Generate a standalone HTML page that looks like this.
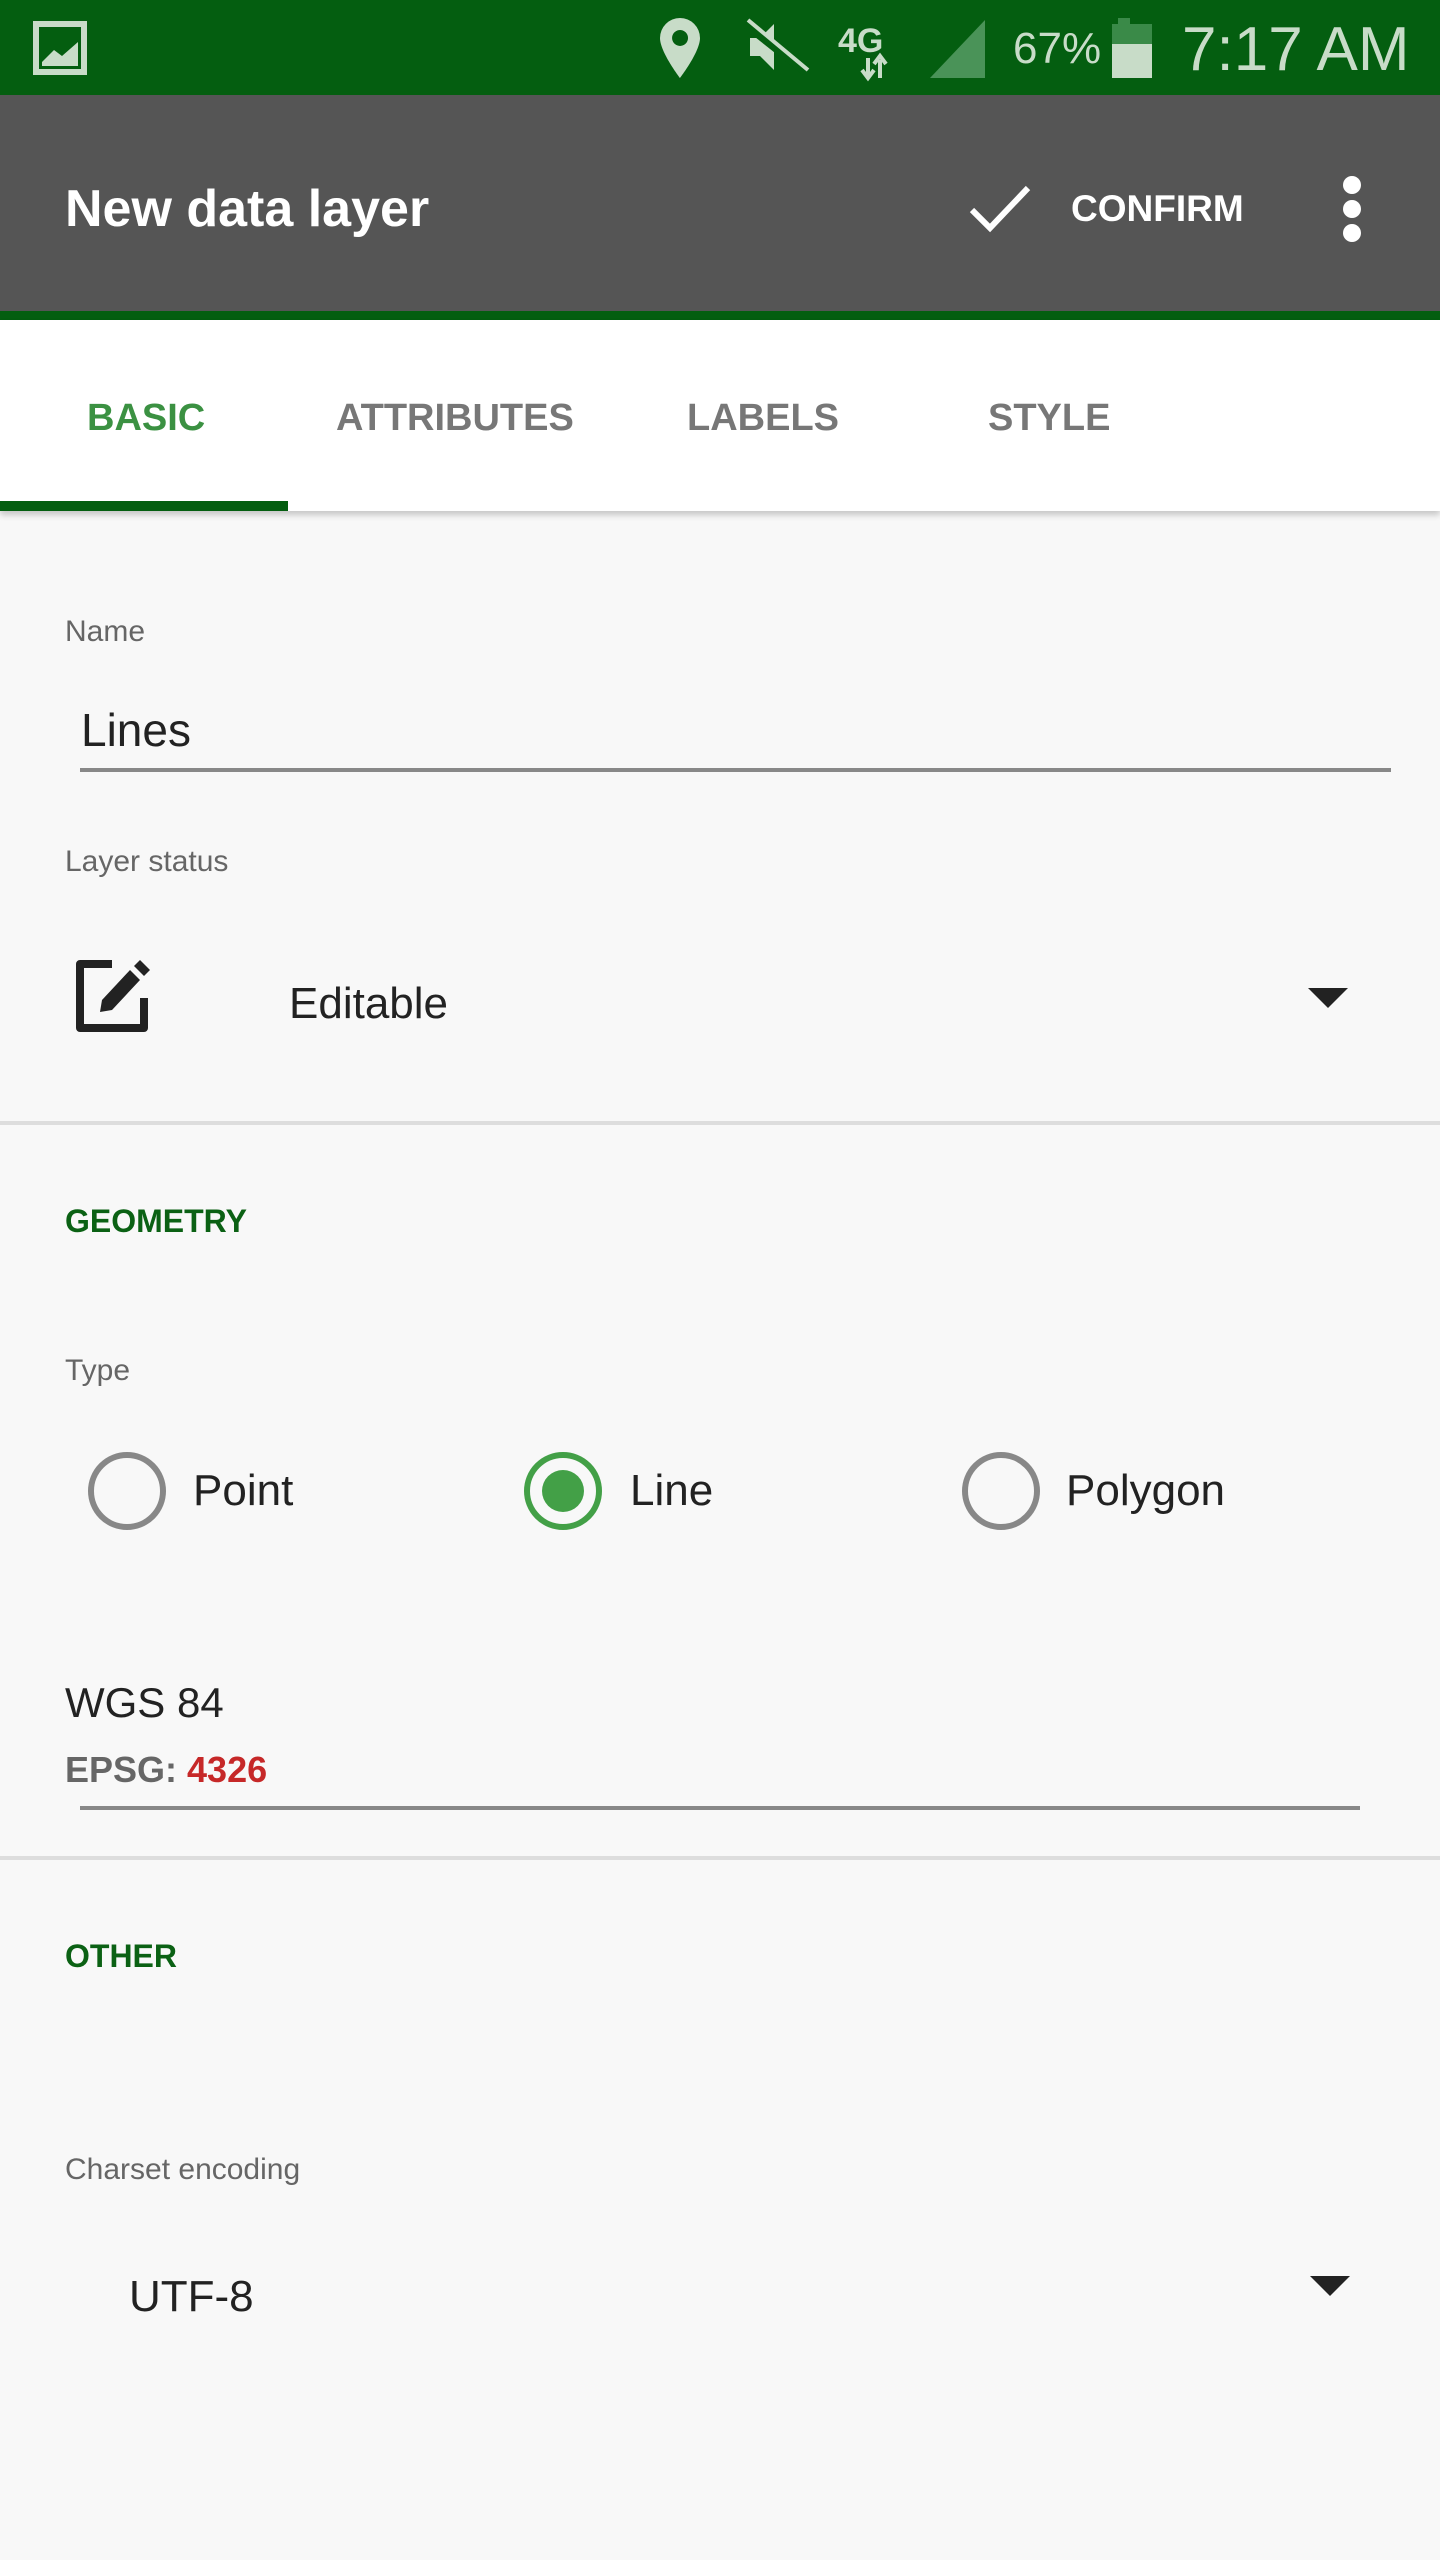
<!DOCTYPE html>
<html><head><meta charset="utf-8"><style>
*{margin:0;padding:0;box-sizing:border-box}
body{width:1440px;height:2560px;background:#f8f8f8;font-family:"Liberation Sans",Arial,sans-serif;position:relative;overflow:hidden}
.a{position:absolute;white-space:nowrap}
.lab{font-size:30px;color:#666;line-height:40px}
.big{font-size:46px;color:#222;line-height:60px}
.sec{font-size:32px;color:#0b6114;font-weight:bold;line-height:44px}
.tab{font-size:38px;font-weight:bold;color:#777;line-height:50px;top:393px}
.rad{position:absolute;width:78px;height:78px;border-radius:50%;border:6px solid #888;top:1452px}
</style></head><body>
<div class="a" style="left:0;top:0;width:1440px;height:95px;background:#045e10"></div>
<svg class="a" style="left:0;top:0" width="1440" height="95">
<rect x="36" y="24" width="48" height="48" fill="none" stroke="#c8dcc8" stroke-width="6"/>
<path d="M42 62 L54 50 L62 56 L78 42 L78 66 L42 66Z" fill="#c8dcc8"/>
<path d="M680 18 a20 20 0 0 1 20 20 c0 14 -20 40 -20 40 c0 0 -20 -26 -20 -40 a20 20 0 0 1 20 -20z M680 30 a8 8 0 1 0 0.1 0z" fill="#c8dcc8" fill-rule="evenodd"/>
<path d="M750 38 h10 l14 -14 v46 l-14 -14 h-10z" fill="#c8dcc8"/>
<path d="M745 24 L808 74" stroke="#045e10" stroke-width="8"/><path d="M748 20 L808 70" stroke="#c8dcc8" stroke-width="4"/>
<text x="838" y="52" font-size="34" font-weight="bold" fill="#c8dcc8" font-family="Liberation Sans">4G</text>
<path d="M868 58 v18 M862 70 l6 8 l6 -8 M880 78 v-18 M874 64 l6 -8 l6 8" stroke="#c8dcc8" stroke-width="4" fill="none"/>
<path d="M930 78 L985 20 V78Z" fill="#4a9358"/>
<text x="1013" y="63" font-size="44" fill="#c8dcc8" font-family="Liberation Sans">67%</text>
<rect x="1118" y="18" width="12" height="8" fill="#3a8a48"/>
<rect x="1112" y="24" width="40" height="54" fill="#3a8a48"/>
<rect x="1112" y="44" width="40" height="34" fill="#c8dcc8"/>
<text x="1182" y="70" font-size="62" fill="#c8dcc8" font-family="Liberation Sans">7:17 AM</text>
</svg>
<div class="a" style="left:0;top:95px;width:1440px;height:216px;background:#555"></div>
<div class="a" style="left:0;top:311px;width:1440px;height:9px;background:#045e10"></div>
<div class="a" style="left:65px;top:178px;font-size:52px;font-weight:bold;color:#fff;line-height:62px">New data layer</div>
<svg class="a" style="left:968px;top:182px" width="64" height="56"><path d="M4 28 L22 46 L60 6" stroke="#fff" stroke-width="6" fill="none"/></svg>
<div class="a" style="left:1071px;top:186px;font-size:37px;font-weight:bold;color:#fff;line-height:46px">CONFIRM</div>
<div class="a" style="left:1343px;top:176px;width:18px;height:18px;border-radius:50%;background:#fff"></div>
<div class="a" style="left:1343px;top:200px;width:18px;height:18px;border-radius:50%;background:#fff"></div>
<div class="a" style="left:1343px;top:224px;width:18px;height:18px;border-radius:50%;background:#fff"></div>
<div class="a" style="left:0;top:320px;width:1440px;height:191px;background:#fff;box-shadow:0 4px 6px rgba(0,0,0,.2)"></div>
<div class="a tab" style="left:87px;color:#3b9142">BASIC</div>
<div class="a tab" style="left:336px">ATTRIBUTES</div>
<div class="a tab" style="left:687px">LABELS</div>
<div class="a tab" style="left:988px">STYLE</div>
<div class="a" style="left:0;top:501px;width:288px;height:10px;background:#045e10"></div>
<div class="a lab" style="left:65px;top:612px">Name</div>
<div class="a big" style="left:81px;top:700px">Lines</div>
<div class="a" style="left:80px;top:768px;width:1311px;height:4px;background:#888"></div>
<div class="a lab" style="left:65px;top:842px">Layer status</div>
<svg class="a" style="left:72px;top:956px" width="84" height="80"><path d="M40 8 H8 V72 H72 V42" stroke="#222" stroke-width="8" fill="none" stroke-linejoin="round"/><path d="M28 56 L30 44 L58 14 L68 24 L40 54Z" fill="#222"/><path d="M62 10 l6 -6 l10 10 l-6 6z" fill="#222"/></svg>
<div class="a big" style="left:289px;top:974px;font-size:44px">Editable</div>
<svg class="a" style="left:1306px;top:986px" width="44" height="24"><path d="M2 2 H42 L22 22Z" fill="#222"/></svg>
<div class="a" style="left:0;top:1121px;width:1440px;height:4px;background:#ddd"></div>
<div class="a sec" style="left:65px;top:1199px">GEOMETRY</div>
<div class="a lab" style="left:65px;top:1351px">Type</div>
<div class="rad" style="left:88px"></div>
<div class="a big" style="left:193px;top:1461px;font-size:44px">Point</div>
<div class="rad" style="left:524px;border-color:#43a047"></div>
<div class="a" style="left:542px;top:1470px;width:42px;height:42px;border-radius:50%;background:#43a047"></div>
<div class="a big" style="left:630px;top:1461px;font-size:44px">Line</div>
<div class="rad" style="left:962px"></div>
<div class="a big" style="left:1066px;top:1461px;font-size:44px">Polygon</div>
<div class="a big" style="left:65px;top:1673px;font-size:42px">WGS 84</div>
<div class="a" style="left:65px;top:1748px;font-size:36px;font-weight:bold;color:#666;line-height:44px">EPSG: <span style="color:#c62828">4326</span></div>
<div class="a" style="left:80px;top:1806px;width:1280px;height:4px;background:#888"></div>
<div class="a" style="left:0;top:1856px;width:1440px;height:4px;background:#ddd"></div>
<div class="a sec" style="left:65px;top:1934px">OTHER</div>
<div class="a lab" style="left:65px;top:2150px">Charset encoding</div>
<div class="a big" style="left:129px;top:2267px;font-size:44px">UTF-8</div>
<svg class="a" style="left:1308px;top:2274px" width="44" height="24"><path d="M2 2 H42 L22 22Z" fill="#222"/></svg>
</body></html>
